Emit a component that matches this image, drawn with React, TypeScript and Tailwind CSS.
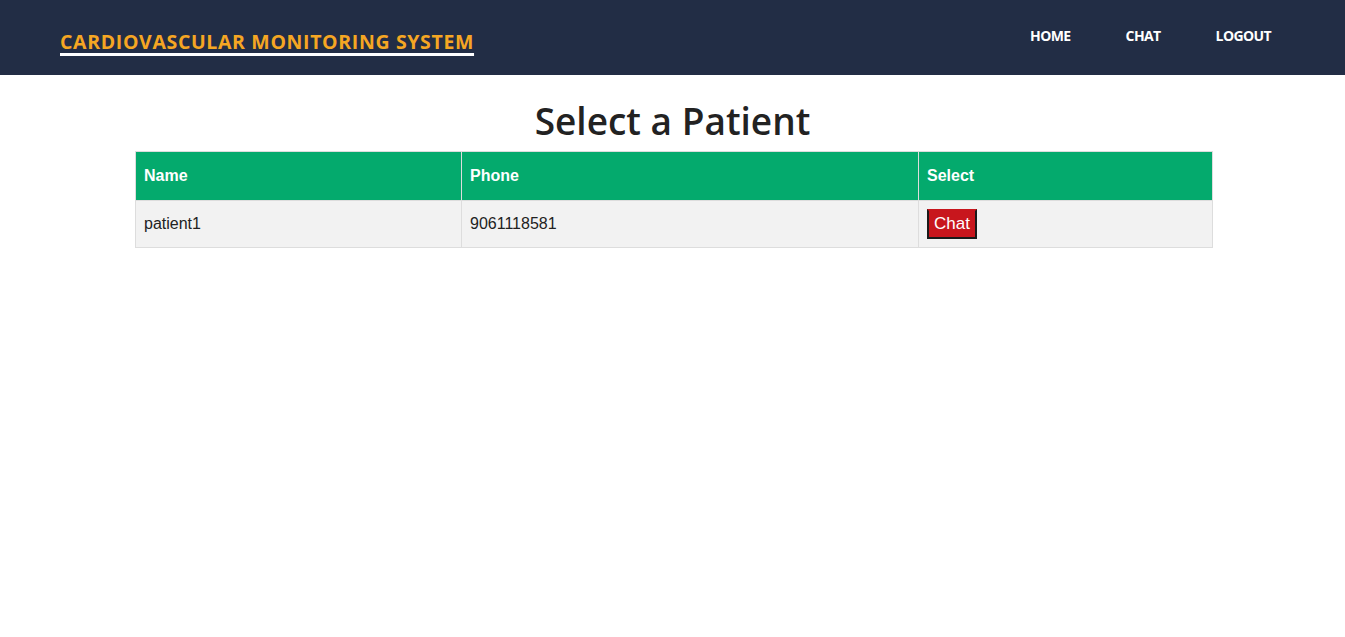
import React from 'react';

const patients = [{ name: 'patient1', phone: '9061118581' }];

const App: React.FC = () => {
  const navLink = "text-white text-[14px] font-bold tracking-[-0.6px]";

  return (
    <div className="min-h-screen bg-white">
      <header className="bg-[#222d45] h-[75px] flex items-start justify-between pl-[60px] pr-[74px]" style={{ fontFamily: '"Open Sans", "Noto Sans", sans-serif' }}>
        <a className="mt-[30px] text-[#f5a623] text-[19.5px] font-bold tracking-[0.65px] underline decoration-white decoration-[3px] underline-offset-[4px] leading-[24px]">
          CARDIOVASCULAR MONITORING SYSTEM
        </a>
        <nav className="flex gap-[55px] mt-[25px]">
          <a className={navLink}>HOME</a>
          <a className={navLink}>CHAT</a>
          <a className={navLink}>LOGOUT</a>
        </nav>
      </header>

      <h1 className="text-center text-[37px] font-semibold text-[#222] leading-[48px] mt-[22px] mb-[6px]" style={{ fontFamily: '"Open Sans", "Noto Sans", sans-serif' }}>
        Select a Patient
      </h1>

      <table className="ml-[135px] w-[1078px] border-collapse text-[16px]" style={{ fontFamily: '"Liberation Sans", Arial, sans-serif' }}>
        <thead>
          <tr className="bg-[#04aa6d] text-white">
            <th className="w-[326px] text-left font-bold px-2 pt-[12px] pb-[12px] border border-[#ddd] h-[48px]">Name</th>
            <th className="w-[457px] text-left font-bold px-2 pt-[12px] pb-[12px] border border-[#ddd]">Phone</th>
            <th className="text-left font-bold px-2 pt-[12px] pb-[12px] border border-[#ddd]">Select</th>
          </tr>
        </thead>
        <tbody>
          {patients.map((p) => (
            <tr key={p.name} className="bg-[#f2f2f2] text-[#222]">
              <td className="px-2 py-2 border border-[#ddd]">{p.name}</td>
              <td className="px-2 py-2 border border-[#ddd]">{p.phone}</td>
              <td className="px-2 py-2 border border-[#ddd]">
                <button className="block bg-[#c8161d] text-white text-[17px] leading-[20px] px-[5px] pt-[3px] pb-[3px] border-2 border-[#1a1a1a] border-t-[#c8161d]">
                  Chat
                </button>
              </td>
            </tr>
          ))}
        </tbody>
      </table>
    </div>
  );
};

export default App;
